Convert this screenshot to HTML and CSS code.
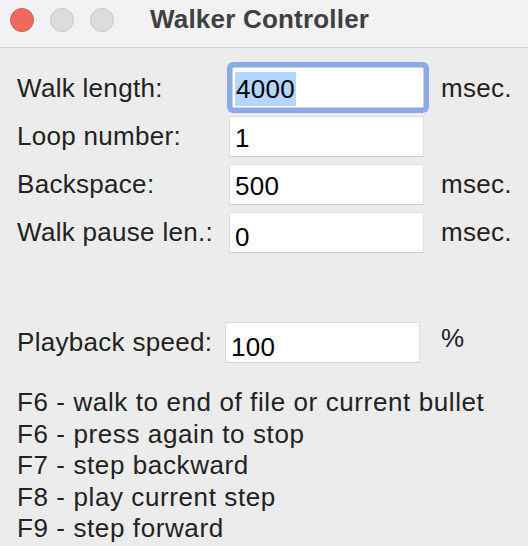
FILE: index.html
```html
<!DOCTYPE html>
<html lang="en">
<head>
    <meta charset="UTF-8">
    <meta name="viewport" content="width=device-width, initial-scale=1.0">
    <title>Walker Controller</title>
    <link rel="stylesheet" href="styles.css">
</head>
<body>
    <div class="window">
        <div class="titlebar">
            <div class="lights">
                <span class="light close"></span>
                <span class="light"></span>
                <span class="light"></span>
            </div>
            <h1 class="title">Walker Controller</h1>
        </div>

        <div class="content">
            <div class="form-grid">
                <label>Walk length:</label>
                <div class="field focused"><span class="sel">4000</span></div>
                <span class="unit">msec.</span>

                <label>Loop number:</label>
                <div class="field">1</div>
                <span class="unit"></span>

                <label>Backspace:</label>
                <div class="field">500</div>
                <span class="unit">msec.</span>

                <label>Walk pause len.:</label>
                <div class="field low">0</div>
                <span class="unit">msec.</span>
            </div>

            <div class="speed-row">
                <label>Playback speed:</label>
                <div class="field low">100</div>
                <span class="unit">%</span>
            </div>

            <ul class="keys">
                <li>F6 - walk to end of file or current bullet</li>
                <li>F6 - press again to stop</li>
                <li>F7 - step backward</li>
                <li>F8 - play current step</li>
                <li>F9 - step forward</li>
            </ul>
        </div>
    </div>
</body>
</html>
```

FILE: styles.css
```css
body { margin: 0; background: #ececec; font-family: "Liberation Sans", Arial, sans-serif; font-size: 26px; color: #222; letter-spacing: 0.3px; }
.window { width: 528px; height: 546px; overflow: hidden; }

.titlebar { display: flex; align-items: center; height: 48px; background: #f2f2f4; border-bottom: 1px solid #d2d2d2; padding-left: 10px; box-sizing: border-box; }
.lights { display: flex; gap: 16px; margin-top: -8px; }
.light { width: 22px; height: 22px; border-radius: 50%; background: #dcdcdc; border: 1px solid #c6c6c6; }
.light.close { background: #ee6a5f; border-color: #d8564c; }
.title { margin: -8px 0 0 36px; font-size: 26px; font-weight: bold; color: #404040; letter-spacing: 0.2px; }

.content { padding: 19px 0 0 17px; }

.form-grid { display: grid; grid-template-columns: 212px 195px auto; row-gap: 7px; align-items: center; }
.field { height: 41px; box-sizing: border-box; background: #fff; border: 1px solid #dedede; border-bottom-color: #cfcfcf; color: #000; padding: 3px 0 0 5px; line-height: 36px; }
.field.low { padding-top: 7px; line-height: 34px; }
.field.focused { border-radius: 2px; box-shadow: 0 0 0 5px #8caaea; border-color: #d0d0d0; margin: 0 0 1px 3px; padding: 3px 0 0 2px; }
.sel { display: inline-block; background: #b3d7ff; line-height: 34px; padding: 0 1px; }
.unit { padding-left: 17px; }

.speed-row { display: grid; grid-template-columns: 208px 195px auto; align-items: center; margin-top: 69px; }
.speed-row .unit { padding-left: 21px; margin-top: -8px; }

.keys { list-style: none; margin: 24px 0 0; padding: 0; line-height: 31.5px; letter-spacing: 0.6px; }
```
